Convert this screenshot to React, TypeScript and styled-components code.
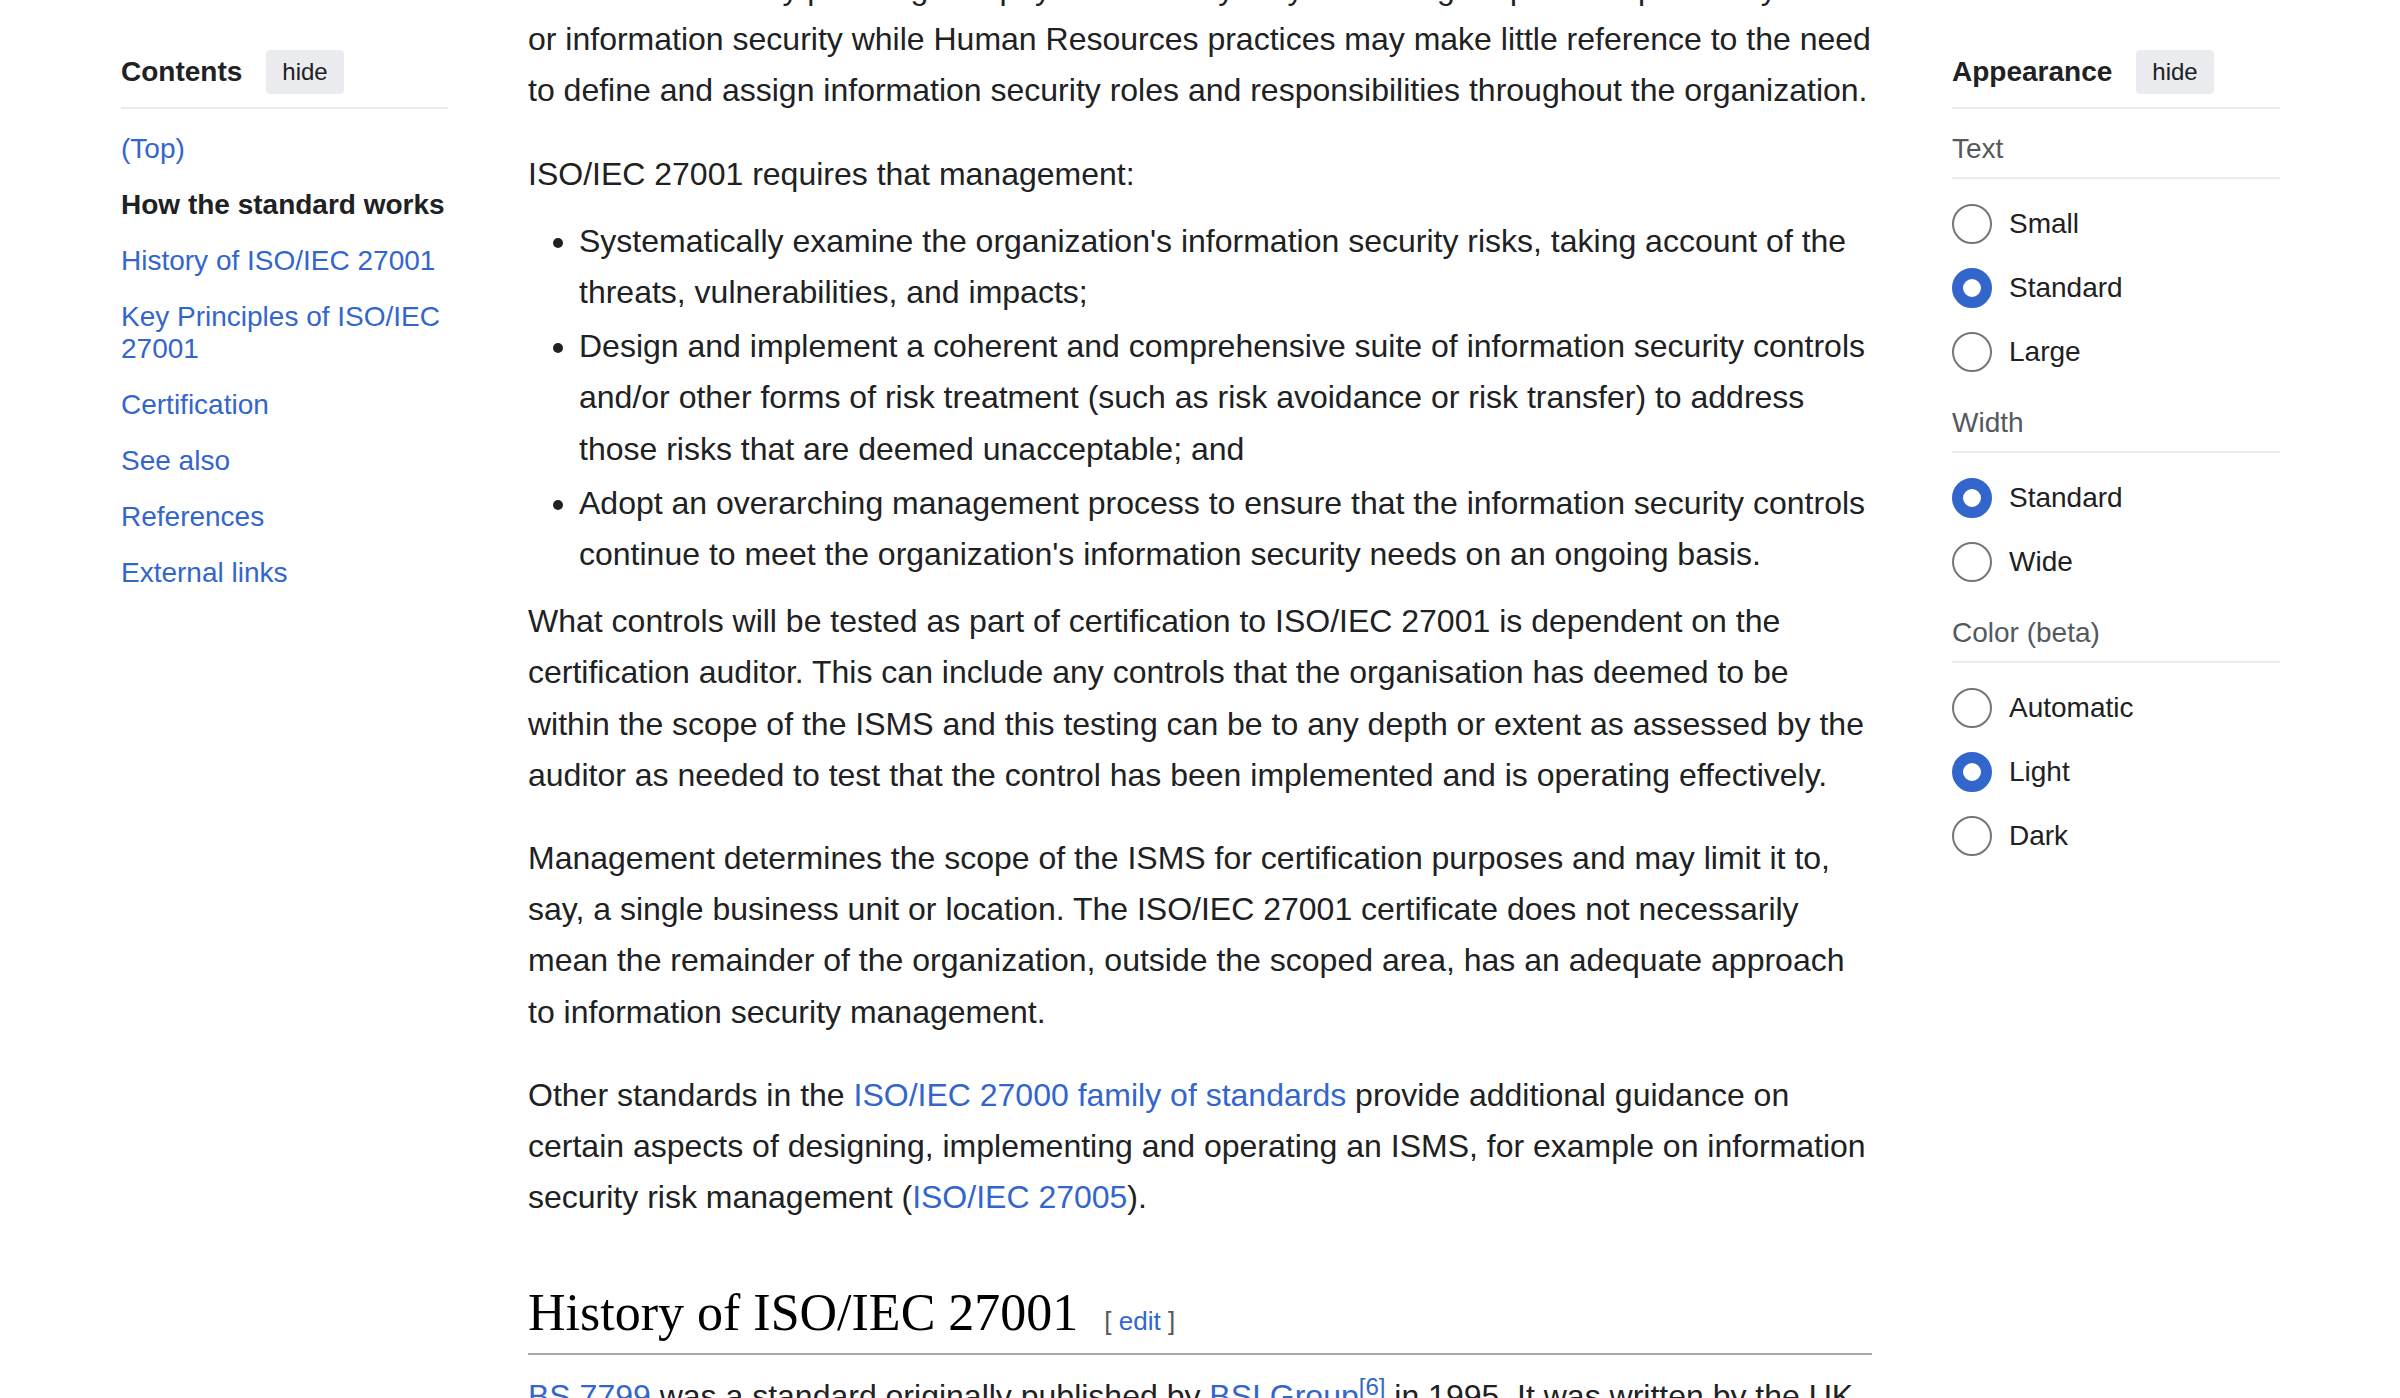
import { createGlobalStyle, styled } from 'styled-components';

const GlobalStyle = createGlobalStyle`
  html, body {
    margin: 0;
    padding: 0;
    overflow: hidden;
    background: #ffffff;
  }
  body {
    font-family: 'Liberation Sans', Arial, sans-serif;
    color: #202122;
  }
`;

// 목차 항목
const tocItems = [
  { label: '(Top)' },
  { label: 'How the standard works', active: true },
  { label: 'History of ISO/IEC 27001' },
  { label: 'Key Principles of ISO/IEC 27001' },
  { label: 'Certification' },
  { label: 'See also' },
  { label: 'References' },
  { label: 'External links' }
];

// 화면 설정 옵션
const appearance = [
  { name: 'text', title: 'Text', options: ['Small', 'Standard', 'Large'], checked: 'Standard' },
  { name: 'width', title: 'Width', options: ['Standard', 'Wide'], checked: 'Standard' },
  { name: 'color', title: 'Color (beta)', options: ['Automatic', 'Light', 'Dark'], checked: 'Light' }
];

const App = () => {
  return (
    <>
      <GlobalStyle />
      <Page>
        <Sidebar>
          <PanelHeader>
            <PanelTitle>Contents</PanelTitle>
            <HideButton>hide</HideButton>
          </PanelHeader>
          <TocList>
            {tocItems.map((item) => (
              <TocItem key={item.label}>
                {item.active ? <TocCurrent>{item.label}</TocCurrent> : <TocLink href="#">{item.label}</TocLink>}
              </TocItem>
            ))}
          </TocList>
        </Sidebar>

        <Main>
          <Para>
            business continuity planning and physical security may be managed quite independently of IT or
            information security while Human Resources practices may make little reference to the need to define
            and assign information security roles and responsibilities throughout the organization.
          </Para>
          <Para $gap={16}>ISO/IEC 27001 requires that management:</Para>
          <BulletList>
            <li>
              Systematically examine the organization's information security risks, taking account of the threats,
              vulnerabilities, and impacts;
            </li>
            <li>
              Design and implement a coherent and comprehensive suite of information security controls and/or
              other forms of risk treatment (such as risk avoidance or risk transfer) to address those risks that
              are deemed unacceptable; and
            </li>
            <li>
              Adopt an overarching management process to ensure that the information security controls continue to
              meet the organization's information security needs on an ongoing basis.
            </li>
          </BulletList>
          <Para>
            What controls will be tested as part of certification to ISO/IEC 27001 is dependent on the
            certification auditor. This can include any controls that the organisation has deemed to be within the
            scope of the ISMS and this testing can be to any depth or extent as assessed by the auditor as needed to
            test that the control has been implemented and is operating effectively.
          </Para>
          <Para>
            Management determines the scope of the ISMS for certification purposes and may limit it to, say, a
            single business unit or location. The ISO/IEC 27001 certificate does not necessarily mean the remainder
            of the organization, outside the scoped area, has an adequate approach to information security
            management.
          </Para>
          <Para>
            Other standards in the <Link href="#">ISO/IEC 27000 family of standards</Link> provide additional
            guidance on certain aspects of designing, implementing and operating an ISMS, for example on information
            security risk management (<Link href="#">ISO/IEC 27005</Link>).
          </Para>
          <Heading>
            History of ISO/IEC 27001
            <EditSection>
              [ <Link href="#">edit</Link> ]
            </EditSection>
          </Heading>
          <Para>
            <Link href="#">BS 7799</Link> was a standard originally published by <Link href="#">BSI Group</Link>
            <Ref>
              <Link href="#">[6]</Link>
            </Ref>{' '}
            in 1995. It was written by the UK Government's Department of Trade and Industry (DTI) and consisted of
            several parts.
          </Para>
        </Main>

        <Sidebar>
          <PanelHeader>
            <PanelTitle>Appearance</PanelTitle>
            <HideButton>hide</HideButton>
          </PanelHeader>
          {appearance.map((group) => (
            <Section key={group.name}>
              <SectionLabel>{group.title}</SectionLabel>
              {group.options.map((option) => (
                <RadioRow key={option}>
                  <Radio name={group.name} defaultChecked={option === group.checked} />
                  {option}
                </RadioRow>
              ))}
            </Section>
          ))}
        </Sidebar>
      </Page>
    </>
  );
};

export default App;

const Page = styled.div`
  display: grid;
  grid-template-columns: 327px 1344px 328px;
  column-gap: 80px;
  align-items: start;
  padding: 0 120px 0 121px;
  height: 100vh;
  overflow: hidden;
  box-sizing: border-box;
`;

const Sidebar = styled.aside`
  padding-top: 50px;
`;

const PanelHeader = styled.div`
  display: flex;
  align-items: center;
  gap: 24px;
  height: 44px;
  padding-bottom: 13px;
  border-bottom: 2px solid #eaecf0;
`;

const PanelTitle = styled.div`
  font-size: 28px;
  font-weight: bold;
  color: #202122;
`;

const HideButton = styled.button`
  height: 44px;
  padding: 0 16px;
  border: none;
  border-radius: 4px;
  background-color: #eaecf0;
  color: #202122;
  font-family: 'Liberation Sans', Arial, sans-serif;
  font-size: 24px;
`;

const TocList = styled.ul`
  list-style: none;
  margin: 12px 0 0 0;
  padding: 0;
`;

const TocItem = styled.li`
  padding: 12px 0;
  font-size: 28px;
  line-height: 32px;
`;

const TocLink = styled.a`
  color: #3366cc;
  text-decoration: none;
`;

const TocCurrent = styled.span`
  font-weight: bold;
  color: #202122;
`;

const Main = styled.main`
  margin-top: -37px;
  font-size: 32px;
  line-height: 51.2px;
  color: #202122;
`;

const Para = styled.p<{ $gap?: number }>`
  margin: 0 0 ${(props) => props.$gap ?? 32}px 0;
`;

const BulletList = styled.ul`
  margin: 0 0 16px 0;
  padding-left: 51px;
  list-style-type: disc;

  li {
    margin-bottom: 3px;
  }
`;

const Link = styled.a`
  color: #3366cc;
  text-decoration: none;
`;

const Heading = styled.h2`
  margin: 57px 0 16px 0;
  padding-bottom: 8px;
  border-bottom: 2px solid #a2a9b1;
  font-family: 'Liberation Serif', Georgia, serif;
  font-size: 52px;
  font-weight: normal;
  line-height: 65px;
  color: #000000;
`;

const EditSection = styled.span`
  margin-left: 26px;
  font-family: 'Liberation Sans', Arial, sans-serif;
  font-size: 26px;
  line-height: 1;
  color: #54595d;
`;

const Ref = styled.sup`
  font-size: 0.75em;
  line-height: 1;
`;

const Section = styled.div`
  margin-top: 24px;

  & + & {
    margin-top: 23px;
  }
`;

const SectionLabel = styled.div`
  padding-bottom: 12px;
  margin-bottom: 13px;
  border-bottom: 2px solid #eaecf0;
  font-size: 28px;
  line-height: 32px;
  color: #54595d;
`;

const RadioRow = styled.label`
  display: flex;
  align-items: center;
  gap: 17px;
  height: 64px;
  font-size: 28px;
  color: #202122;
`;

const Radio = styled.input.attrs({ type: 'radio' })`
  appearance: none;
  box-sizing: border-box;
  width: 40px;
  height: 40px;
  margin: 0;
  border: 2px solid #72777d;
  border-radius: 50%;
  background-color: #ffffff;

  &:checked {
    border: 11px solid #3366cc;
  }
`;
